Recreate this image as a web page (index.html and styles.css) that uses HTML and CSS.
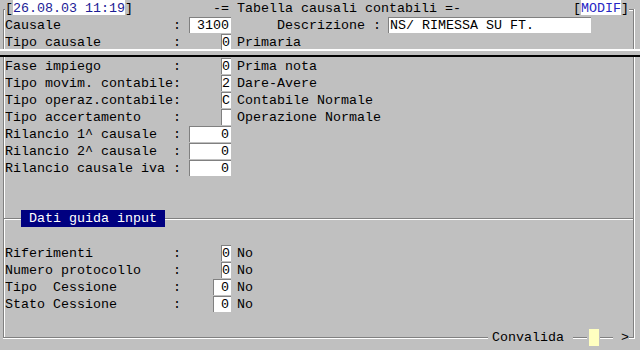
FILE: index.html
```html
<!DOCTYPE html>
<html lang="it">
<head>
    <meta charset="UTF-8">
    <meta name="viewport" content="width=device-width, initial-scale=1.0">
    <title>Tabella causali contabili</title>
    <link rel="stylesheet" href="styles.css">
</head>
<body>
    <div class="screen">
        <!-- header with key fields -->
        <div class="head">
            <div class="row top">
                <span>[</span><span class="stamp">26.08.03 11:19</span><span>]</span>
                <span class="title">-= Tabella causali contabili =-</span>
                <span class="mode">[<span class="mode-text">MODIF</span>]</span>
            </div>
            <div class="row">
                <span class="lbl">Causale</span><span class="sep">:</span>
                <span class="slot"><span class="box w5">3100</span></span>
                <span class="desc-lbl">Descrizione :</span>
                <span class="box wide">NS/ RIMESSA SU FT.</span>
            </div>
            <div class="row short">
                <span class="lbl">Tipo causale</span><span class="sep">:</span>
                <span class="slot"><span class="box w1">0</span></span>
                <span class="note">Primaria</span>
            </div>
        </div>

        <div class="rule"></div>

        <div class="panel">
            <div class="row">
                <span class="lbl">Fase impiego</span><span class="sep">:</span>
                <span class="slot"><span class="box w1">0</span></span>
                <span class="note">Prima nota</span>
            </div>
            <div class="row">
                <span class="lbl">Tipo movim. contabile</span><span class="sep">:</span>
                <span class="slot"><span class="box w1">2</span></span>
                <span class="note">Dare-Avere</span>
            </div>
            <div class="row">
                <span class="lbl">Tipo operaz.contabile</span><span class="sep">:</span>
                <span class="slot"><span class="box w1">C</span></span>
                <span class="note">Contabile Normale</span>
            </div>
            <div class="row">
                <span class="lbl">Tipo accertamento</span><span class="sep">:</span>
                <span class="slot"><span class="box w1"></span></span>
                <span class="note">Operazione Normale</span>
            </div>
            <div class="row">
                <span class="lbl">Rilancio 1^ causale</span><span class="sep">:</span>
                <span class="slot"><span class="box w5">0</span></span>
            </div>
            <div class="row">
                <span class="lbl">Rilancio 2^ causale</span><span class="sep">:</span>
                <span class="slot"><span class="box w5">0</span></span>
            </div>
            <div class="row">
                <span class="lbl">Rilancio causale iva</span><span class="sep">:</span>
                <span class="slot"><span class="box w5">0</span></span>
            </div>

            <div class="divider">
                <span class="seg lead"></span>
                <span class="section">Dati guida input</span>
                <span class="seg fill"></span>
            </div>

            <div class="group">
                <div class="row">
                    <span class="lbl">Riferimenti</span><span class="sep">:</span>
                    <span class="slot"><span class="box w1">0</span></span>
                    <span class="note">No</span>
                </div>
                <div class="row">
                    <span class="lbl">Numero protocollo</span><span class="sep">:</span>
                    <span class="slot"><span class="box w1">0</span></span>
                    <span class="note">No</span>
                </div>
                <div class="row">
                    <span class="lbl">Tipo  Cessione</span><span class="sep">:</span>
                    <span class="slot"><span class="box w2">0</span></span>
                    <span class="note">No</span>
                </div>
                <div class="row">
                    <span class="lbl">Stato Cessione</span><span class="sep">:</span>
                    <span class="slot"><span class="box w2">0</span></span>
                    <span class="note">No</span>
                </div>
            </div>
        </div>

        <!-- bottom edge with confirm key -->
        <div class="footer">
            <span class="seg fill"></span>
            <span class="confirm">Convalida</span>
            <span class="seg s2"></span>
            <span class="key"></span>
            <span class="seg s3"></span>
            <span class="arrow">&gt;</span>
            <span class="seg s4"></span>
        </div>
    </div>
</body>
</html>
```

FILE: styles.css
```css
body {
    margin: 0;
    background-color: #c0c0c0;
    font: 13.333px/17px "Liberation Mono", "Courier New", monospace;
    color: #000;
}

.screen {
    width: 640px;
    height: 350px;
    overflow: hidden;
}

/* Etched frame round the header */
.head {
    margin: 9px 6px 0 3px;
    padding-left: 1px;
    border: 1px solid #808080;
    border-bottom: none;
    box-shadow: inset 1px 1px 0 #fff, 1px 0 0 #fff;
}

/* Field rows */
.row {
    display: flex;
    height: 17px;
    white-space: pre;
}

.row.top {
    margin: -10px 4px 0 0;
    background-color: #c0c0c0;
}

.row.short {
    height: 15px;
}

.stamp {
    display: inline-block;
    height: 15px;
    background-color: #fff;
    color: #1c1c96;
}

.title {
    margin-left: 80px;
}

.mode {
    margin-left: auto;
}

.mode-text {
    display: inline-block;
    height: 15px;
    background-color: #fff;
    color: #2626c4;
}

.lbl {
    width: 168px;
}

.sep {
    width: 8px;
}

.slot {
    display: flex;
    justify-content: flex-end;
    width: 50px;
}

.note {
    margin-left: 6px;
}

/* White input boxes */
.box {
    box-sizing: border-box;
    height: 16px;
    line-height: 15px;
    padding-right: 2px;
    background-color: #fff;
    border-top: 1px solid #808080;
    border-left: 1px solid #808080;
    text-align: right;
}

.w1 { width: 10px; }
.w2 { width: 18px; }
.w5 { width: 42px; }

.desc-lbl {
    margin-left: 46px;
}

.box.wide {
    width: 203px;
    margin-left: 7px;
    padding: 0 0 0 1px;
    text-align: left;
}

/* Separator between header and body */
.rule {
    height: 4px;
    border-top: 2px solid #fff;
    border-bottom: 2px solid #000;
}

.panel {
    box-sizing: border-box;
    height: 282px;
    margin: 0 6px 0 3px;
    padding: 1px 0 0 1px;
    border-left: 1px solid #808080;
    border-right: 1px solid #808080;
    box-shadow: inset 1px 0 0 #fff, 1px 0 0 #fff;
}

/* Etched line pieces */
.seg {
    box-sizing: border-box;
    height: 2px;
    border-top: 1px solid #808080;
    border-bottom: 1px solid #fff;
}

.seg.fill {
    flex: 1;
}

.divider {
    display: flex;
    align-items: center;
    height: 17px;
    margin: 33px 0 0 -1px;
}

.seg.lead {
    width: 17px;
}

.section {
    box-sizing: border-box;
    width: 144px;
    height: 17px;
    padding-left: 8px;
    background-color: #000080;
    color: #fff;
}

.group {
    margin-top: 18px;
}

.footer {
    display: flex;
    align-items: center;
    height: 18px;
    margin: -10px 6px 0 3px;
    line-height: 18px;
}

.confirm {
    margin: 0 9px 0 4px;
}

.seg.s2 {
    width: 14px;
    margin-right: 2px;
}

.key {
    align-self: flex-start;
    width: 10px;
    height: 17px;
    margin-right: 1px;
    background-color: #ffffc0;
}

.seg.s3 {
    width: 13px;
}

.arrow {
    width: 8px;
    margin-left: 8px;
}

.seg.s4 {
    width: 5px;
}
```
